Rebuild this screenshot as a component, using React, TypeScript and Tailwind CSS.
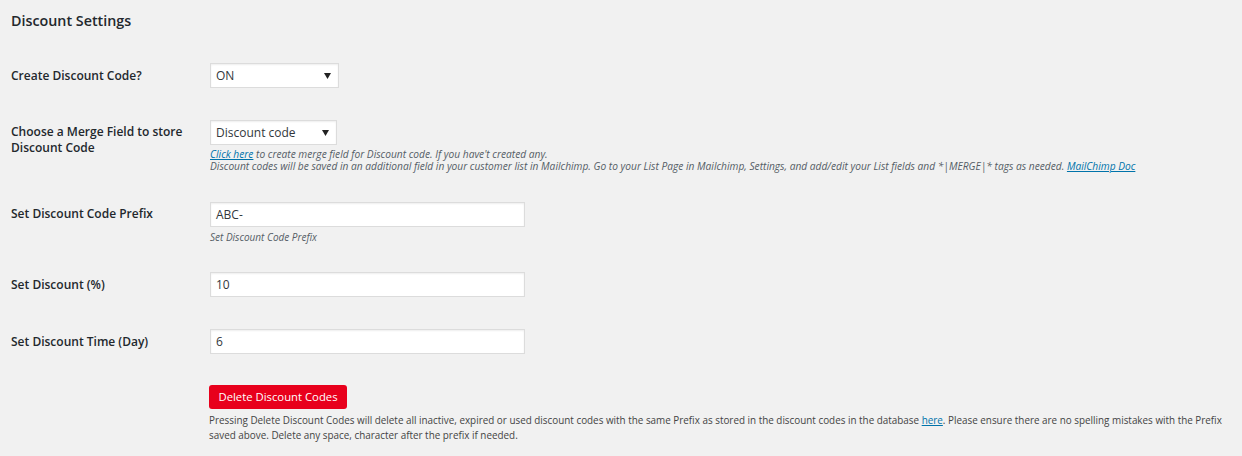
import React from "react";

const Caret = () => (
  <svg width="7" height="6" viewBox="0 0 7 6" className="shrink-0">
    <path d="M0 0 H7 L3.5 6 Z" fill="#222" />
  </svg>
);

function Select({ value, width }: { value: string; width: string }) {
  return (
    <div
      className={`${width} h-[25px] bg-white border border-[#dcdcdc] flex items-center justify-between pl-[5px] pr-[7px] text-[12px] text-[#32373c] shadow-[inset_0_1px_2px_rgba(0,0,0,0.07)]`}
    >
      <span>{value}</span>
      <Caret />
    </div>
  );
}

function Input({ value }: { value: string }) {
  return (
    <div className="w-[315px] h-[25px] bg-white border border-[#dcdcdc] flex items-center pl-[5px] text-[12px] text-[#32373c] shadow-[inset_0_1px_2px_rgba(0,0,0,0.07)]">
      {value}
    </div>
  );
}

function Label({ children }: { children: React.ReactNode }) {
  return (
    <div className="w-[199px] shrink-0 text-[12px] leading-[16px] font-semibold text-[#23282d]">
      {children}
    </div>
  );
}

export default function App() {
  return (
    <div
      className="w-[1242px] h-[456px] bg-[#f1f1f1] pl-[11px] pt-[11px] overflow-hidden"
      style={{ fontFamily: '"Open Sans", "Noto Sans", sans-serif' }}
    >
      <h2 className="text-[14.3px] leading-[20px] font-semibold text-[#23282d]">Discount Settings</h2>

      <div className="flex items-center mt-[32px]">
        <Label>Create Discount Code?</Label>
        <Select value="ON" width="w-[129px]" />
      </div>

      <div className="flex items-start mt-[32px]">
        <div className="pt-[4px]">
          <Label>
            Choose a Merge Field to store
            <br />
            Discount Code
          </Label>
        </div>
        <div>
          <Select value="Discount code" width="w-[127px]" />
          <div className="mt-[3px] text-[10.2px] leading-[12px] italic text-[#555d66]">
            <div>
              <span className="text-[#0073aa] underline">Click here</span> to create merge field for Discount code. If you have't created any.
            </div>
            <div>
              Discount codes will be saved in an additional field in your customer list in Mailchimp. Go to your List Page in Mailchimp, Settings, and add/edit your List fields and *|MERGE|* tags as needed.{" "}
              <span className="text-[#0073aa] underline">MailChimp Doc</span>
            </div>
          </div>
        </div>
      </div>

      <div className="flex items-start mt-[30px]">
        <div className="pt-[4px]">
          <Label>Set Discount Code Prefix</Label>
        </div>
        <div>
          <Input value="ABC-" />
          <div className="mt-[4px] text-[10px] leading-[13px] italic text-[#555d66]">Set Discount Code Prefix</div>
        </div>
      </div>

      <div className="flex items-center mt-[28px]">
        <Label>Set Discount (%)</Label>
        <Input value="10" />
      </div>

      <div className="flex items-center mt-[32px]">
        <Label>Set Discount Time (Day)</Label>
        <Input value="6" />
      </div>

      <div className="ml-[198px] mt-[31px]">
        <div className="w-[138px] h-[24px] rounded-[3px] bg-[#e8001c] text-white text-[11.3px] flex items-center justify-center">
          Delete Discount Codes
        </div>
        <div className="mt-[4px] text-[9.9px] leading-[15px] text-[#444] pr-[10px]">
          Pressing Delete Discount Codes will delete all inactive, expired or used discount codes with the same Prefix as stored in the discount codes in the database{" "}
          <span className="text-[#0073aa] underline">here</span>. Please ensure there are no spelling mistakes with the Prefix
          <br />
          saved above. Delete any space, character after the prefix if needed.
        </div>
      </div>
    </div>
  );
}
